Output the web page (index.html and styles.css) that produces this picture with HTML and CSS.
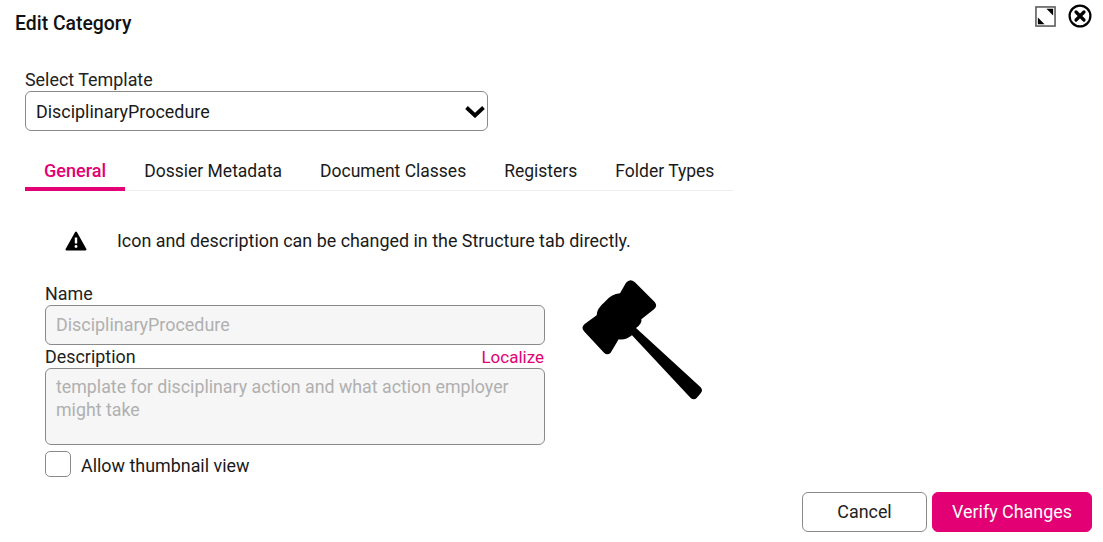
FILE: index.html
```html
<!DOCTYPE html>
<html lang="en">
<head>
  <meta charset="UTF-8" />
  <title>Edit Category</title>
  <link rel="stylesheet" href="styles.css">
</head>
<body>
  <div class="dialog">
    <div class="header">
      <h2 class="title">Edit Category</h2>
      <div class="window-icons">
        <svg class="icon-expand" width="21" height="21" viewBox="0 0 22 22">
          <rect x="1" y="1" width="20" height="20" fill="#fff" stroke="#555" stroke-width="1.6"/>
          <path d="M12 3h7v7z" fill="#000"/>
          <path d="M3 12v7h7z" fill="#000"/>
        </svg>
        <svg class="icon-close" width="24" height="24" viewBox="0 0 24 24">
          <circle cx="12" cy="12" r="10.4" fill="#fff" stroke="#000" stroke-width="2.2"/>
          <path d="M8 8l8 8M16 8l-8 8" fill="none" stroke="#000" stroke-width="3.2" stroke-linecap="round"/>
        </svg>
      </div>
    </div>

    <div class="template">
      <label class="label">Select Template</label>
      <div class="select">
        <span>DisciplinaryProcedure</span>
        <svg width="20" height="14" viewBox="0 0 20 14">
          <path d="M1.500 3.500L10 11.500l8.500-8" fill="none" stroke="#000" stroke-width="3.800"/>
        </svg>
      </div>
    </div>

    <div class="tabs">
      <div class="tab active">General</div>
      <div class="tab">Dossier Metadata</div>
      <div class="tab">Document Classes</div>
      <div class="tab">Registers</div>
      <div class="tab">Folder Types</div>
    </div>

    <div class="notice">
      <svg width="22" height="20" viewBox="0 0 22 20">
        <path d="M11 1.500L20.500 18.500H1.500z" fill="#000" stroke="#000" stroke-width="2" stroke-linejoin="round"/>
        <path d="M11 6.500v6" stroke="#fff" stroke-width="2.400"/>
        <circle cx="11" cy="15.500" r="1.400" fill="#fff"/>
      </svg>
      <span class="notice-text">Icon and description can be changed in the Structure tab directly.</span>
    </div>

    <div class="body-row">
      <div class="form">
        <label class="label">Name</label>
        <div class="input">DisciplinaryProcedure</div>
        <div class="label-row">
          <label class="label">Description</label>
          <a class="link">Localize</a>
        </div>
        <div class="textarea">template for disciplinary action and what action employer might take</div>
        <div class="check-row">
          <span class="checkbox"></span>
          <span class="check-label">Allow thumbnail view</span>
        </div>
      </div>
      <svg class="hammer" width="145" height="140" viewBox="0 0 435 420">
        <path d="M168 38Q180 24 194 36L254 96Q264 108 252 118L214 148Q218 160 198 174L392 352Q400 362 392 370L380 384Q372 392 362 384L186 196Q166 212 146 208L122 248Q112 258 102 248L42 184Q32 172 44 162L80 136Q80 116 104 96Q124 72 150 70z" fill="#000"/>
      </svg>
    </div>

    <div class="footer">
      <button class="btn">Cancel</button>
      <button class="btn primary">Verify Changes</button>
    </div>
  </div>
</body>
</html>
```

FILE: styles.css
```css
* { box-sizing: border-box; }
html, body { margin: 0; height: 100%; background: #fff; }
body { font-family: Roboto, "Noto Sans", sans-serif; font-size: 17.9px; font-weight: 400; color: #1a1a1a; }
.dialog { width: 1103px; height: 542px; padding: 3px 11px 10px 15px; display: flex; flex-direction: column; overflow: hidden; }
.header { display: flex; justify-content: space-between; align-items: flex-start; height: 66px; }
.title { margin: 10px 0 0; font-size: 19.4px; font-weight: 500; line-height: 22px; color: #111; }
.window-icons { display: flex; gap: 12px; align-items: flex-start; }
.icon-expand { margin-top: 3px; }
.icon-close { margin-top: 1px; }
.template { margin-left: 10px; width: 463px; }
.label { display: block; line-height: 22px; color: #222; }
.select { height: 40px; margin-top: 0; padding: 0 0 0 10px; border: 1px solid #8a8a8a; border-radius: 6px; display: flex; align-items: center; justify-content: space-between; }
.select svg { margin-right: 2px; }
.tabs { display: flex; margin: 21px 0 0 10px; width: 708px; height: 39px; border-bottom: 1px solid #eee; font-size: 17.5px; }
.tab { padding: 0 19px; line-height: 38px; height: 39px; white-space: nowrap; }
.tab.active { color: #e20074; font-size: 18.1px; font-weight: 500; border-bottom: 4px solid #e20074; }
.notice { display: flex; align-items: center; margin: 38px 0 0 50px; height: 24px; gap: 30px; }
.notice-text { padding-bottom: 2px; }
.body-row { display: flex; margin: 30px 0 0 30px; }
.form { width: 500px; }
.input, .textarea { background: #f6f6f6; border: 1px solid #8a8a8a; border-radius: 6px; color: #b0b0b0; padding: 0 10px; }
.input { height: 40px; line-height: 38px; }
.label-row { display: flex; justify-content: space-between; height: 23px; align-items: center; }
.link { color: #e20074; font-size: 17px; padding-right: 1px; }
.textarea { height: 77px; padding-top: 6px; line-height: 23px; font-size: 17.8px; }
.check-row { display: flex; align-items: center; gap: 10px; margin-top: 6px; }
.check-label { padding-top: 3px; }
.checkbox { width: 26px; height: 26px; border: 1px solid #8a8a8a; border-radius: 5px; background: #fff; }
.hammer { margin: -13px 0 0 25px; }
.footer { margin-top: auto; display: flex; justify-content: flex-end; gap: 5px; }
.btn { height: 40px; padding-bottom: 3px; border-radius: 6px; border: 1px solid #8a8a8a; background: #fff; font: inherit; color: #222; width: 125px; }
.btn.primary { background: #e20074; border-color: #e20074; color: #fff; width: 160px; }
```
